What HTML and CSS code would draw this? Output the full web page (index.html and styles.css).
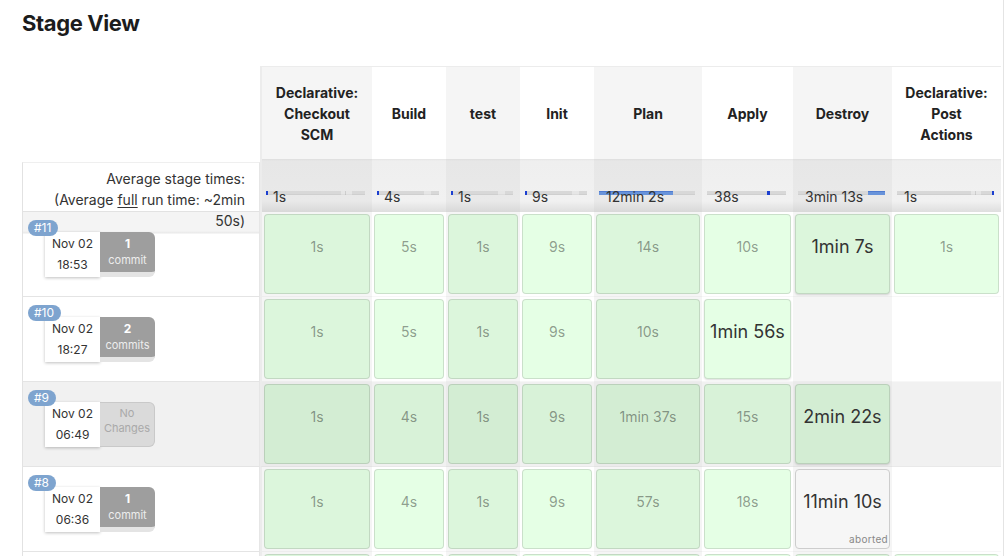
FILE: index.html
```html
<!DOCTYPE html>
<html>
<head>
<meta charset="utf-8">
<title>Stage View</title>
<link rel="stylesheet" href="styles.css">
</head>
<body>
<div class="page">
  <h2 class="title">Stage View</h2>
  <div class="grid">
    <div class="row">
      <div class="corner"></div>
      <div class="th g first">Declarative:<br>Checkout<br>SCM</div>
      <div class="th w">Build</div>
      <div class="th g">test</div>
      <div class="th w">Init</div>
      <div class="th g">Plan</div>
      <div class="th w">Apply</div>
      <div class="th g">Destroy</div>
      <div class="th w">Declarative:<br>Post<br>Actions</div>
    </div>

    <div class="row">
      <div class="avg-label"><div class="avg-text">Average stage times:<br>(Average <u>full</u> run time: ~2min<br>50s)</div></div>
      <div class="avg g first"><div class="meter"><div class="bar seg"><span class="fill tick" style="left:0;width:2px"></span></div><span class="avg-time">1s</span></div></div>
      <div class="avg w"><div class="meter"><div class="bar seg"><span class="fill tick" style="left:0;width:2px"></span></div><span class="avg-time">4s</span></div></div>
      <div class="avg g"><div class="meter"><div class="bar seg"><span class="fill tick" style="left:0;width:2px"></span></div><span class="avg-time">1s</span></div></div>
      <div class="avg w"><div class="meter"><div class="bar seg"><span class="fill tick" style="left:0;width:2px"></span></div><span class="avg-time">9s</span></div></div>
      <div class="avg g"><div class="meter"><div class="bar"><span class="fill wide" style="left:0;width:77%"></span></div><span class="avg-time">12min 2s</span></div></div>
      <div class="avg w"><div class="meter"><div class="bar"><span class="fill tick" style="left:76%;width:3px"></span></div><span class="avg-time">38s</span></div></div>
      <div class="avg g"><div class="meter"><div class="bar"><span class="fill wide" style="left:81%;width:19%"></span></div><span class="avg-time">3min 13s</span></div></div>
      <div class="avg w"><div class="meter"><div class="bar seg"><span class="fill tick" style="left:98%;width:2px"></span></div><span class="avg-time">1s</span></div></div>
    </div>

    <div class="row">
      <div class="build top">
        <span class="badge">#11</span>
        <div class="info">
          <div class="date">Nov 02<br>18:53</div>
          <div class="commits"><b>1</b><span>commit</span></div>
        </div>
      </div>
      <div class="cell g first"><div class="box">1s</div></div>
      <div class="cell w"><div class="box">5s</div></div>
      <div class="cell g"><div class="box">1s</div></div>
      <div class="cell w"><div class="box">9s</div></div>
      <div class="cell g"><div class="box">14s</div></div>
      <div class="cell w"><div class="box">10s</div></div>
      <div class="cell g"><div class="box long">1min 7s</div></div>
      <div class="cell w"><div class="box">1s</div></div>
    </div>

    <div class="row">
      <div class="build">
        <span class="badge">#10</span>
        <div class="info">
          <div class="date">Nov 02<br>18:27</div>
          <div class="commits"><b>2</b><span>commits</span></div>
        </div>
      </div>
      <div class="cell g first"><div class="box">1s</div></div>
      <div class="cell w"><div class="box">5s</div></div>
      <div class="cell g"><div class="box">1s</div></div>
      <div class="cell w"><div class="box">9s</div></div>
      <div class="cell g"><div class="box">10s</div></div>
      <div class="cell w"><div class="box long">1min 56s</div></div>
      <div class="cell g"></div>
      <div class="cell w"></div>
    </div>

    <div class="row hl">
      <div class="build">
        <span class="badge">#9</span>
        <div class="info">
          <div class="date">Nov 02<br>06:49</div>
          <div class="commits none"><span>No<br>Changes</span></div>
        </div>
      </div>
      <div class="cell g first"><div class="box">1s</div></div>
      <div class="cell w"><div class="box">4s</div></div>
      <div class="cell g"><div class="box">1s</div></div>
      <div class="cell w"><div class="box">9s</div></div>
      <div class="cell g"><div class="box">1min 37s</div></div>
      <div class="cell w"><div class="box">15s</div></div>
      <div class="cell g"><div class="box long">2min 22s</div></div>
      <div class="cell w"></div>
    </div>

    <div class="row">
      <div class="build">
        <span class="badge">#8</span>
        <div class="info">
          <div class="date">Nov 02<br>06:36</div>
          <div class="commits"><b>1</b><span>commit</span></div>
        </div>
      </div>
      <div class="cell g first"><div class="box">1s</div></div>
      <div class="cell w"><div class="box">4s</div></div>
      <div class="cell g"><div class="box">1s</div></div>
      <div class="cell w"><div class="box">9s</div></div>
      <div class="cell g"><div class="box">57s</div></div>
      <div class="cell w"><div class="box">18s</div></div>
      <div class="cell g"><div class="box long aborted"><span>11min 10s</span><span class="status">aborted</span></div></div>
      <div class="cell w"></div>
    </div>

    <div class="row">
      <div class="build"></div>
      <div class="cell g first"><div class="box"></div></div>
      <div class="cell w"><div class="box"></div></div>
      <div class="cell g"><div class="box"></div></div>
      <div class="cell w"><div class="box"></div></div>
      <div class="cell g"><div class="box"></div></div>
      <div class="cell w"><div class="box"></div></div>
      <div class="cell g"><div class="box"></div></div>
      <div class="cell w"><div class="box"></div></div>
    </div>
  </div>
</div>
</body>
</html>
```

FILE: styles.css
```css
* {
  box-sizing: border-box;
}

html,
body {
  margin: 0;
  padding: 0;
  overflow: hidden;
  background: #fff;
}

body {
  font-family: Inter, "Liberation Sans", Arial, sans-serif;
  color: #333;
}

.page {
  width: 1004px;
  height: 556px;
  border-right: 1px solid #e4e4e4;
  padding: 10px 0 0 22px;
}

.title {
  margin: 0;
  font-size: 22px;
  line-height: 26px;
  font-weight: 700;
  color: #1c1c1c;
  letter-spacing: -0.4px;
}

.grid {
  display: grid;
  margin-top: 30px;
  grid-template-columns: 238px 112px 74px 74px 74px 108px 91px 99px 109px;
  grid-template-rows: 93px 53px repeat(5, 85px);
}

.row {
  display: contents;
}

.g {
  background: #f5f5f5;
}

.w {
  background: #fff;
}

.first {
  border-left: 2px solid #ececec;
}

/* header */
.th {
  display: flex;
  align-items: center;
  justify-content: center;
  text-align: center;
  font-weight: 700;
  font-size: 14px;
  line-height: 21px;
  color: #222;
  border-top: 1px solid #ececec;
}

/* averages */
.avg-label {
  margin-top: 3px;
  border-top: 1px solid #efefef;
  border-left: 1px solid #e2e2e2;
  border-right: 1px solid #e6e6e6;
  border-bottom: 1px solid #e2e2e2;
  padding: 5px 14px 0 0;
  text-align: right;
  font-size: 14px;
  line-height: 21px;
  color: #333;
}

.avg-text {
  position: relative;
  z-index: 2;
}

.avg-text u {
  text-decoration-thickness: 1px;
  text-underline-offset: 2px;
}

.avg {
  padding: 29px 7px 0 5px;
}

.avg.first {
  padding-left: 4px;
}

.avg.g {
  background: linear-gradient(#dedede 0, #e7e7e7 2px, #e9e9e9 42px, #d8d8d8 100%);
}

.avg.w {
  background: linear-gradient(#e4e4e4 0, #efefef 2px, #f1f1f1 42px, #dedede 100%);
}

.meter {
  display: grid;
}

.meter > * {
  grid-area: 1 / 1;
}

.bar {
  position: relative;
  height: 4px;
  margin-top: 3px;
  background: #d8d8d8;
  box-shadow: inset 0 -1px 0 rgba(0, 0, 0, 0.04);
}

.bar.seg {
  background: linear-gradient(to right,
    #d8d8d8 0, #d8d8d8 76%,
    #e6e6e6 76%, #e6e6e6 80%,
    #cdcdcd 80%, #cdcdcd 81%,
    #e6e6e6 81%, #e6e6e6 87%,
    #d8d8d8 87%);
}

.fill {
  position: absolute;
  top: 0;
  bottom: 0;
}

.fill.tick {
  background: #1c3fd0;
}

.fill.wide {
  background: #6893da;
  box-shadow: inset 0 1px 0 #4f7bd0;
}

.avg-time {
  position: relative;
  padding-left: 7px;
  font-size: 14px;
  line-height: 18px;
  color: #333;
  white-space: nowrap;
}

/* build rows */
.cell {
  padding: 2px;
  border-bottom: 1px solid rgba(0, 0, 0, 0.03);
}

.row.hl .cell.g {
  background: #ebebeb;
}

.row.hl .cell.w {
  background: #f1f1f1;
}

.box {
  height: 80px;
  border: 1px solid rgba(0, 0, 0, 0.12);
  border-radius: 4px;
  background: rgba(0, 255, 0, 0.1);
  display: flex;
  flex-direction: column;
  align-items: center;
  padding-top: 22px;
  font-size: 14px;
  line-height: 20px;
  color: rgba(0, 0, 0, 0.4);
  white-space: nowrap;
}

.box.long {
  font-size: 18px;
  color: #333;
  box-shadow: 0 1px 2px rgba(0, 0, 0, 0.14);
}

.box.aborted {
  background: #f6f6f6;
  border-color: #cdcdcd;
  box-shadow: none;
}

.status {
  margin-top: auto;
  align-self: flex-end;
  font-size: 10px;
  line-height: 12px;
  color: #888;
  letter-spacing: 0.3px;
  padding: 0 1px 3px 0;
}

.build {
  border-left: 1px solid #e2e2e2;
  border-right: 1px solid #e6e6e6;
  border-bottom: 1px solid #e4e4e4;
  padding: 8px 0 0 5px;
  background: #fff;
}

.build.top {
  background: linear-gradient(#f4f4f4 0, #f4f4f4 19px, #e9e9e9 21px, #fff 22px);
}

.row.hl .build {
  background: #f1f1f1;
}

.badge {
  position: relative;
  z-index: 1;
  display: block;
  width: max-content;
  background: #7ea4cf;
  color: #fff;
  font-size: 12px;
  line-height: 16px;
  padding: 0 7px 0 6px;
  border-radius: 8px;
}

.info {
  display: flex;
  margin: -4px 0 0 17px;
}

.date {
  width: 55px;
  height: 45px;
  background: #fff;
  box-shadow: 0 1px 3px rgba(0, 0, 0, 0.25);
  font-size: 12px;
  line-height: 21px;
  text-align: center;
  padding-top: 1px;
  color: #333;
}

.commits {
  width: 55px;
  height: 45px;
  background: #9e9e9e;
  border-bottom: 5px solid #e4e4e4;
  border-radius: 0 6px 6px 0;
  color: #fff;
  text-align: center;
  padding-top: 4px;
  font-size: 11px;
  line-height: 16px;
}

.commits b {
  display: block;
  font-size: 12px;
}

.commits span {
  color: #ededed;
}

.commits.none {
  background: #dadada;
  border: 1px solid #c9c9c9;
  border-left: 0;
  padding-top: 3px;
  line-height: 15px;
}

.commits.none span {
  color: #a9a9a9;
}
```
